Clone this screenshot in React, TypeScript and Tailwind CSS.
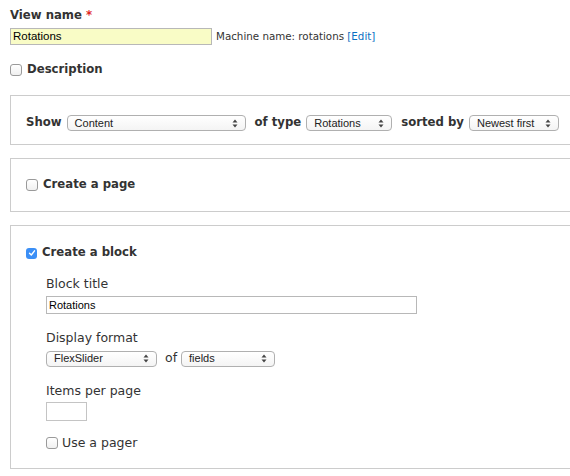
import type { ReactNode } from "react";

const sans = "font-['DejaVu_Sans',sans-serif]";

const arial = "font-['Liberation_Sans',Arial,sans-serif]";

function Arrows() {
  return (
    <svg
      width="6"
      height="9"
      viewBox="0 0 6 9"
      className="shrink-0"
    >
      <path
        d="M0.5 3.5 L3 0.5 L5.5 3.5 Z"
        fill="#444"
      />
      <path
        d="M0.5 5.5 L3 8.5 L5.5 5.5 Z"
        fill="#444"
      />
    </svg>
  );
}

function Select({
  value,
  width,
}: {
  value: string;
  width: string;
}) {
  return (
    <div
      className={`flex h-[16px] shrink-0 items-center justify-between rounded-[4px] border border-[#b0b0b0] bg-gradient-to-b from-white to-[#f4f4f4] pl-[7px] pr-[7px] text-[11px] font-normal text-[#222] ${arial} ${width}`}
    >
      <span className="leading-none">
        {value}
      </span>

      <Arrows />
    </div>
  );
}

function Checkbox({
  checked,
}: {
  checked?: boolean;
}) {
  if (checked) {
    return (
      <div className="flex h-[11px] w-[11px] shrink-0 items-center justify-center rounded-[3px] bg-[#3b8ff6]">
        <svg
          width="8"
          height="8"
          viewBox="0 0 8 8"
        >
          <path
            d="M1.5 4.2 L3.3 6 L6.5 1.8"
            fill="none"
            stroke="white"
            strokeWidth="1.4"
            strokeLinecap="round"
            strokeLinejoin="round"
          />
        </svg>
      </div>
    );
  }

  return (
    <div className="h-[12px] w-[12px] shrink-0 rounded-[3px] border border-[#9a9a9a] bg-gradient-to-b from-white to-[#f0f0f0]" />
  );
}

function Fieldset({
  children,
  className,
}: {
  children: ReactNode;
  className: string;
}) {
  return (
    <div
      className={`w-[580px] border border-[#cccccc] ${className}`}
    >
      {children}
    </div>
  );
}

export default function App() {
  return (
    <div
      className={`h-[476px] w-[570px] overflow-hidden bg-white pl-[10px] pt-[6px] text-[#333] ${sans}`}
    >
      <div className="flex h-[20px] items-center text-[11.7px] font-bold">
        View name
        <span className="ml-[4px] text-[#e0281f]">
          *
        </span>
      </div>

      <div className="mt-[2px] flex items-center">
        <div
          className={`flex h-[17px] w-[202px] items-center border border-[#b8b8b8] bg-[#f9fcc6] px-[2px] text-[11.5px] text-black ${arial}`}
        >
          Rotations
        </div>

        <span className="ml-[4px] text-[10.3px] text-[#333]">
          Machine name: rotations{" "}
          <span className="text-[#0a6fc2]">
            [Edit]
          </span>
        </span>
      </div>

      <div className="mt-[15px] flex h-[20px] items-center gap-[5px] text-[11.7px] font-bold">
        <Checkbox />
        Description
      </div>

      <Fieldset className="mt-[15px] h-[50px] pl-[15px] pt-[19px]">
        <div className="flex h-[16px] items-center text-[11.7px] font-bold">
          <span>Show</span>

          <div className="ml-[5px]">
            <Select
              value="Content"
              width="w-[179px]"
            />
          </div>

          <span className="ml-[9px]">
            of type
          </span>

          <div className="ml-[5px]">
            <Select
              value="Rotations"
              width="w-[86px]"
            />
          </div>

          <span className="ml-[9px]">
            sorted by
          </span>

          <div className="ml-[5px]">
            <Select
              value="Newest first"
              width="w-[90px]"
            />
          </div>
        </div>
      </Fieldset>

      <Fieldset className="mt-[13px] flex h-[54px] items-center pl-[15px]">
        <div className="flex items-center gap-[5px] text-[11.7px] font-bold">
          <Checkbox />
          Create a page
        </div>
      </Fieldset>

      <Fieldset className="mt-[13px] h-[244px] pl-[15px] pt-[17px]">
        <div className="flex h-[20px] items-center gap-[5px] text-[11.7px] font-bold">
          <Checkbox checked />
          Create a block
        </div>

        <div className="pl-[20px] text-[12.5px]">
          <div className="mt-[12px] flex h-[18px] items-center">
            Block title
          </div>

          <div
            className={`mt-[3px] flex h-[18px] w-[371px] items-center border border-[#b8b8b8] px-[2px] text-[11px] text-black ${arial}`}
          >
            Rotations
          </div>

          <div className="mt-[15px] flex h-[18px] items-center">
            Display format
          </div>

          <div className="mt-[3px] flex h-[17px] items-center">
            <Select
              value="FlexSlider"
              width="w-[111px]"
            />

            <span className="ml-[8px] mr-[4px]">
              of
            </span>

            <Select
              value="fields"
              width="w-[94px]"
            />
          </div>

          <div className="mt-[15px] flex h-[18px] items-center">
            Items per page
          </div>

          <div className="mt-[2px] h-[19px] w-[41px] border border-[#c4c4c4]" />

          <div className="mt-[13px] flex h-[18px] items-center gap-[4px]">
            <Checkbox />
            Use a pager
          </div>
        </div>
      </Fieldset>
    </div>
  );
}
